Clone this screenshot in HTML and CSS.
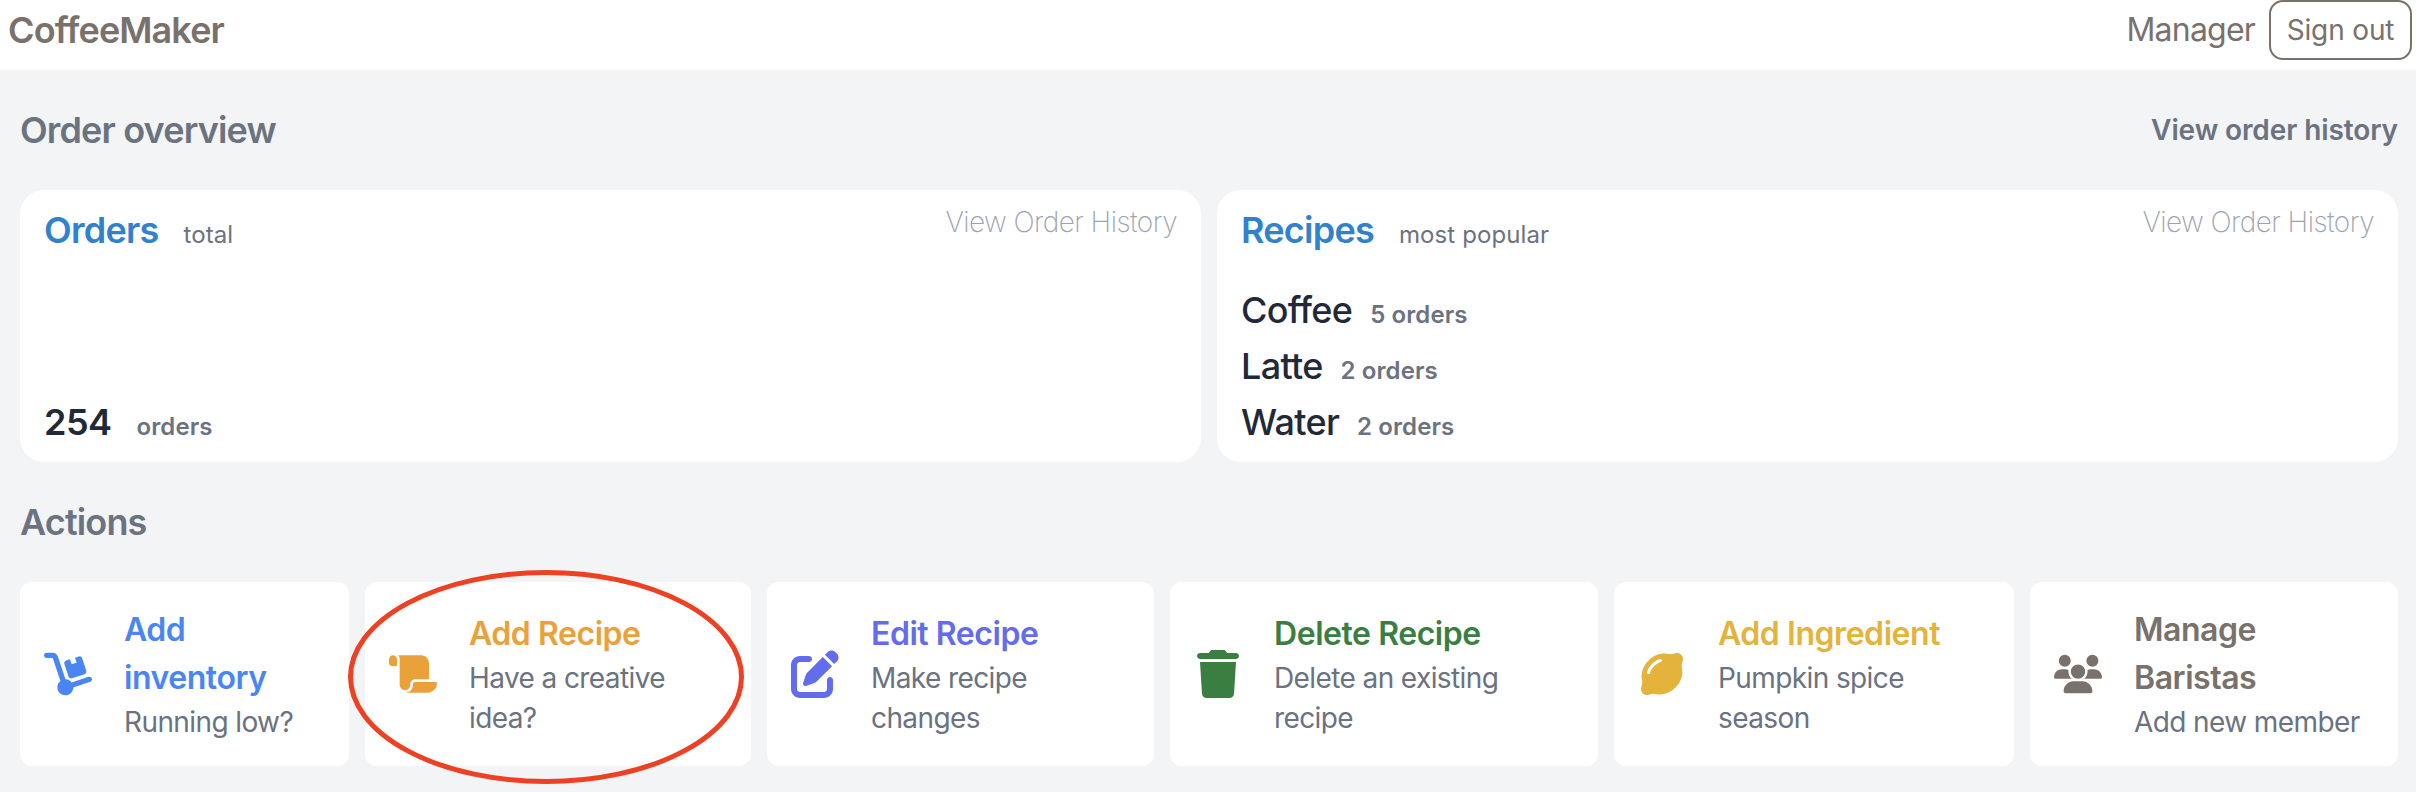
FILE: index.html
```html
<!DOCTYPE html>
<html lang="en">
<head>
<meta charset="utf-8">
<title>CoffeeMaker</title>
<link rel="stylesheet" href="styles.css">
</head>
<body>
<header class="topbar">
  <span class="brand">CoffeeMaker</span>
  <div class="account">
    <span class="role">Manager</span>
    <button class="signout">Sign out</button>
  </div>
</header>
<main class="page">
  <div class="section-head">
    <h2 class="section-title">Order overview</h2>
    <a class="section-link">View order history</a>
  </div>
  <section class="overview">
    <article class="panel">
      <div class="panel-head">
        <div class="line"><h3 class="panel-title">Orders</h3><span class="panel-note">total</span></div>
        <a class="panel-link">View Order History</a>
      </div>
      <div class="line"><span class="total">254</span><span class="count count-total">orders</span></div>
    </article>
    <article class="panel">
      <div class="panel-head">
        <div class="line"><h3 class="panel-title">Recipes</h3><span class="panel-note">most popular</span></div>
        <a class="panel-link">View Order History</a>
      </div>
      <div class="ranking">
        <div class="line"><span class="drink">Coffee</span><span class="count">5 orders</span></div>
        <div class="line"><span class="drink">Latte</span><span class="count">2 orders</span></div>
        <div class="line"><span class="drink">Water</span><span class="count">2 orders</span></div>
      </div>
    </article>
  </section>
  <div class="section-head">
    <h2 class="section-title">Actions</h2>
  </div>
  <section class="actions">
    <article class="action blue">
      <svg class="icon" viewBox="0 0 576 512"><path d="M0 32C0 14.3 14.3 0 32 0h72.9c27.5 0 52 17.6 60.7 43.8L257.7 320c30.1 .5 56.8 14.9 74 37l202.1-67.4c16.8-5.6 34.9 3.5 40.5 20.2s-3.5 34.9-20.2 40.5L352 417.7c-.9 52.2-43.5 94.3-96 94.3c-53 0-96-43-96-96c0-30.8 14.5-58.2 37-75.8L104.9 64H32C14.3 64 0 49.7 0 32zM244.8 134.5c-5.5-16.8 3.7-34.9 20.5-40.3L311 79.4l19.8 60.9 60.9-19.8L371.8 59.6l45.7-14.8c16.8-5.5 34.9 3.7 40.3 20.5l49.4 152.2c5.5 16.8-3.7 34.9-20.5 40.3L334.5 307.2c-16.8 5.5-34.9-3.7-40.3-20.5L244.8 134.5z"/></svg>
      <div><h4 class="action-title">Add<br>inventory</h4><p class="action-text">Running low?</p></div>
    </article>
    <article class="action orange">
      <svg class="icon" viewBox="0 0 576 512"><path d="M0 80v48c0 17.7 14.3 32 32 32H48 96V80c0-26.5-21.5-48-48-48S0 53.5 0 80zM112 32c10 13.4 16 30 16 48V384c0 35.3 28.7 64 64 64s64-28.7 64-64v-5.3c0-32.4 26.3-58.7 58.7-58.7H480V128c0-53-43-96-96-96H112zM464 480c61.9 0 112-50.1 112-112c0-8.8-7.2-16-16-16H314.7c-14.7 0-26.7 11.9-26.7 26.7V384c0 53-43 96-96 96H368h96z"/></svg>
      <div><h4 class="action-title">Add Recipe</h4><p class="action-text">Have a creative<br>idea?</p></div>
      <svg class="marker" viewBox="0 0 396 214"><ellipse cx="198" cy="107" rx="195.5" ry="104.5"/></svg>
    </article>
    <article class="action indigo">
      <svg class="icon" viewBox="0 0 512 512"><path d="M471.6 21.7c-21.9-21.9-57.3-21.9-79.2 0L362.3 51.7l97.9 97.9 30.1-30.1c21.9-21.9 21.9-57.3 0-79.2L471.6 21.7zm-299.2 220c-6.1 6.1-10.8 13.6-13.5 21.9l-29.6 88.8c-2.9 8.6-.6 18.1 5.8 24.6s15.9 8.7 24.6 5.8l88.8-29.6c8.2-2.7 15.7-7.4 21.9-13.5L437.7 172.3 339.7 74.3 172.4 241.7zM96 64C43 64 0 107 0 160V416c0 53 43 96 96 96H352c53 0 96-43 96-96V320c0-17.7-14.3-32-32-32s-32 14.3-32 32v96c0 17.7-14.3 32-32 32H96c-17.7 0-32-14.3-32-32V160c0-17.7 14.3-32 32-32h96c17.7 0 32-14.3 32-32s-14.3-32-32-32H96z"/></svg>
      <div><h4 class="action-title">Edit Recipe</h4><p class="action-text">Make recipe<br>changes</p></div>
    </article>
    <article class="action green">
      <svg class="icon" viewBox="0 0 448 512"><path d="M135.2 17.7L128 32H32C14.3 32 0 46.3 0 64S14.3 96 32 96H416c17.7 0 32-14.3 32-32s-14.3-32-32-32H320l-7.2-14.3C307.4 6.8 296.3 0 284.2 0H163.8c-12.1 0-23.2 6.8-28.6 17.7zM416 128H32L53.2 467c1.6 25.3 22.6 45 47.9 45H346.9c25.3 0 46.3-19.7 47.9-45L416 128z"/></svg>
      <div><h4 class="action-title">Delete Recipe</h4><p class="action-text">Delete an existing<br>recipe</p></div>
    </article>
    <article class="action yellow">
      <svg class="icon" viewBox="0 0 448 512"><path d="M448 96c0-35.3-28.7-64-64-64c-6.6 0-13 1-19 2.9c-22.5 7-48.1 14.9-71 9c-75.2-19.1-156.4 11-213.7 68.3S-7.2 250.8 11.9 326c5.8 22.9-2 48.4-9 71C1 403 0 409.4 0 416c0 35.3 28.7 64 64 64c6.6 0 13-1 19.1-2.9c22.5-7 48.1-14.9 71-9c75.2 19.1 156.4-11 213.7-68.3s87.5-138.5 68.3-213.7c-5.8-22.9 2-48.4 9-71c1.9-6 2.9-12.4 2.9-19.1zM212.5 127.4c-54.6 16-101.1 62.5-117.1 117.1C92.9 253 84 257.8 75.5 255.4S62.2 244 64.6 235.5c19.1-65.1 73.7-119.8 138.9-138.9c8.5-2.5 17.4 2.4 19.9 10.9s-2.4 17.4-10.9 19.9z"/></svg>
      <div><h4 class="action-title">Add Ingredient</h4><p class="action-text">Pumpkin spice<br>season</p></div>
    </article>
    <article class="action stone">
      <svg class="icon" viewBox="0 0 640 512"><path d="M144 0a80 80 0 1 1 0 160A80 80 0 1 1 144 0zM512 0a80 80 0 1 1 0 160A80 80 0 1 1 512 0zM0 298.7C0 239.8 47.8 192 106.7 192h42.7c15.9 0 31 3.5 44.6 9.7c-1.3 7.2-1.9 14.7-1.9 22.3c0 38.2 16.8 72.5 43.3 96c-.2 0-.4 0-.7 0H21.3C9.6 320 0 310.4 0 298.7zM405.3 320c-.2 0-.4 0-.7 0c26.6-23.5 43.3-57.8 43.3-96c0-7.6-.7-15-1.9-22.3c13.6-6.3 28.7-9.7 44.6-9.7h42.7C592.2 192 640 239.8 640 298.7c0 11.8-9.6 21.3-21.3 21.3H405.3zM224 224a96 96 0 1 1 192 0 96 96 0 1 1 -192 0zM128 485.3C128 411.7 187.7 352 261.3 352H378.7C452.3 352 512 411.7 512 485.3c0 14.7-11.9 26.7-26.7 26.7H154.7c-14.7 0-26.7-11.9-26.7-26.7z"/></svg>
      <div><h4 class="action-title">Manage<br>Baristas</h4><p class="action-text">Add new member</p></div>
    </article>
  </section>
</main>
</body>
</html>
```
FILE: styles.css
```css
* { box-sizing: border-box; margin: 0; padding: 0; }
body {
  height: 792px;
  overflow: hidden;
  background: #f3f4f6;
  color: #6b7280;
  font-family: Inter, "Liberation Sans", sans-serif;
  font-variant-ligatures: none;
  white-space: nowrap;
}
.topbar {
  display: flex;
  justify-content: space-between;
  height: 70px;
  padding: 0 4px 0 8px;
  background: #fff;
  color: #78716c;
  line-height: 60px;
}
.brand { font-size: 36px; font-weight: 600; letter-spacing: -0.9px; }
.account { display: flex; gap: 14px; }
.role { font-size: 32px; letter-spacing: -0.8px; }
.signout {
  width: 143px;
  height: 60px;
  border: 2px solid #78716c;
  border-radius: 14px;
  background: #fff;
  color: #78716c;
  font: 400 28px/56px Inter, "Liberation Sans", sans-serif;
  letter-spacing: -0.15px;
}
.page { padding: 0 18px 0 20px; }
.section-head {
  display: flex;
  align-items: center;
  justify-content: space-between;
  height: 120px;
}
.section-title { font-size: 36px; font-weight: 600; letter-spacing: -0.85px; }
.section-link { font-size: 28px; font-weight: 600; letter-spacing: -0.1px; }
.overview { display: grid; grid-template-columns: 1fr 1fr; gap: 16px; }
.panel {
  display: flex;
  flex-direction: column;
  justify-content: space-between;
  height: 272px;
  padding: 12px 24px;
  border-radius: 24px;
  background: #fff;
}
.panel-head { display: flex; justify-content: space-between; }
.line { display: flex; align-items: baseline; height: 56px; line-height: 56px; }
.panel-title { color: #3182ce; font-size: 36px; font-weight: 600; letter-spacing: -0.75px; }
.panel-note { margin-left: 25px; font-size: 24px; line-height: 1; letter-spacing: 0.1px; }
.panel-link { color: #9ca3af; font-size: 28px; font-weight: 200; line-height: 40px; letter-spacing: -0.55px; }
.total { color: #1f2937; font-size: 36px; font-weight: 600; letter-spacing: -0.5px; }
.drink { color: #1f2937; font-size: 36px; font-weight: 500; letter-spacing: -0.7px; }
.count { margin-left: 18px; font-size: 24px; font-weight: 600; line-height: 1; letter-spacing: 0.1px; }
.count-total { margin-left: 25px; }
.actions {
  display: grid;
  grid-template-columns: 329px 386px 387px 428px 400px 368px;
  gap: 16px;
}
.action {
  position: relative;
  display: flex;
  align-items: center;
  gap: 32px;
  height: 184px;
  padding: 0 24px;
  border-radius: 12px;
  background: #fff;
}
.icon { flex: none; width: 48px; height: 48px; fill: currentColor; }
.action-title { font-size: 32px; font-weight: 600; line-height: 48px; letter-spacing: -0.45px; }
.action-text { color: #6b7280; font-size: 28px; line-height: 40px; letter-spacing: -0.6px; }
.marker {
  position: absolute;
  left: -17px;
  top: -12px;
  width: 396px;
  height: 214px;
  fill: none;
  stroke: #ee4023;
  stroke-width: 5;
}
.blue { color: #4a86f2; }
.orange { color: #eba13a; }
.indigo { color: #636cec; }
.green { color: #3a7f41; }
.yellow { color: #e4b33c; }
.stone { color: #78716c; }
```
